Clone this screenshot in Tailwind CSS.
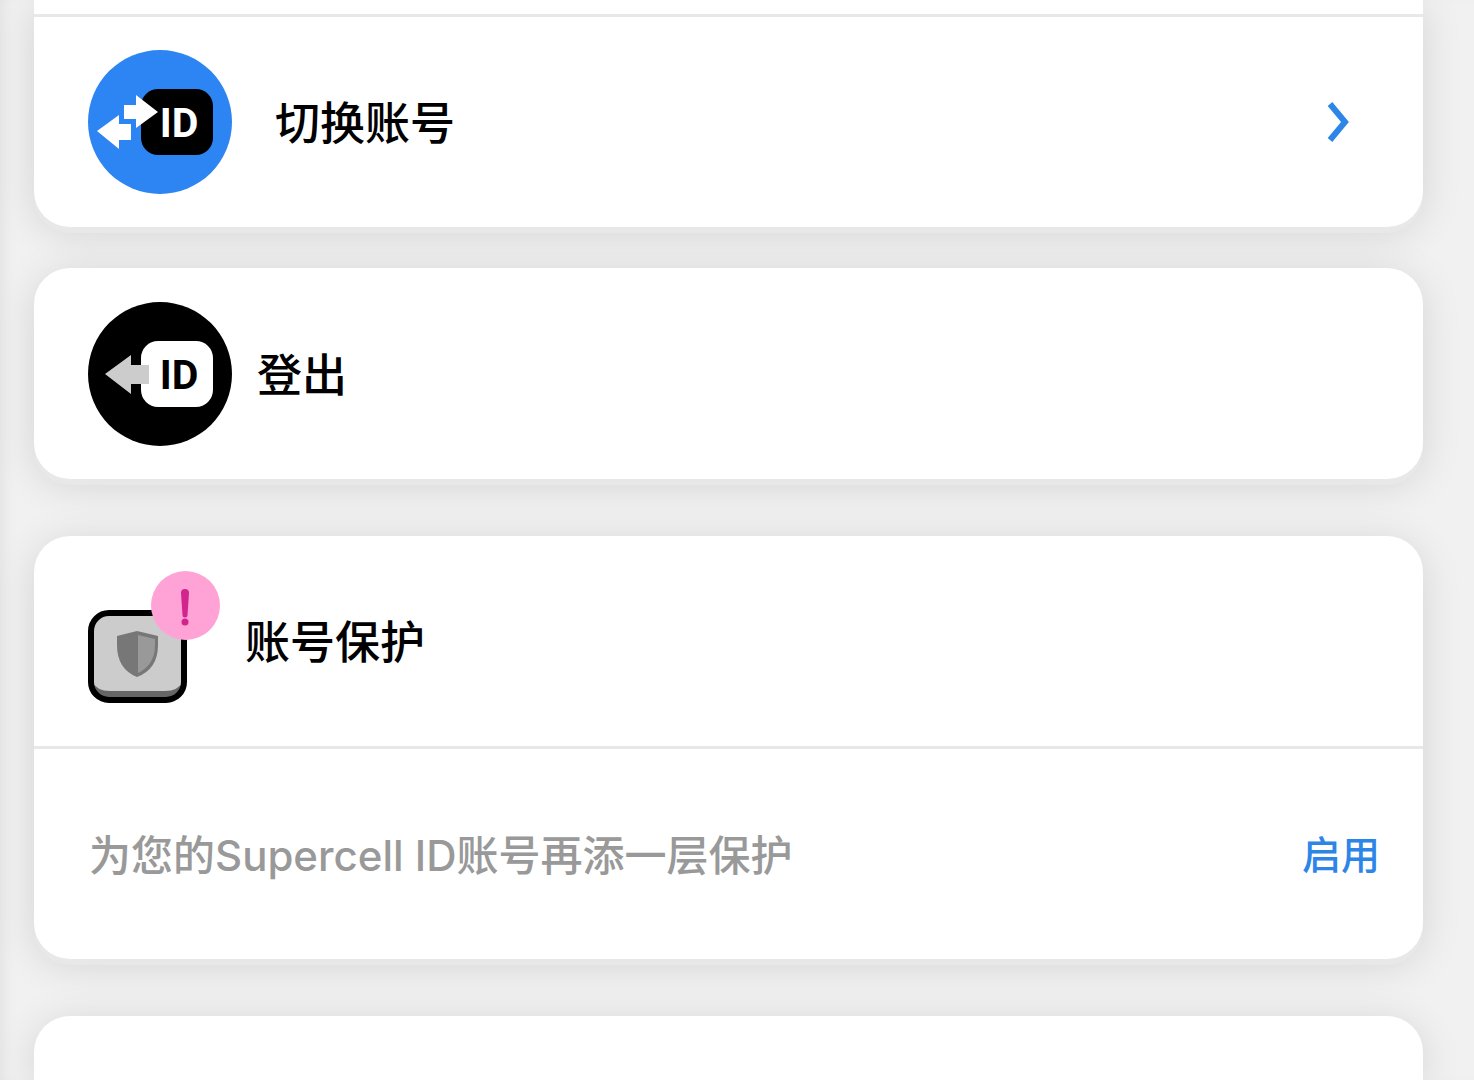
<!DOCTYPE html>
<html lang="zh-CN">
<head>
    <meta charset="UTF-8">
    <meta name="viewport" content="width=device-width, initial-scale=1.0">
    <script src="https://cdn.jsdelivr.net/npm/@tailwindcss/browser@4"></script>
    <title>Supercell ID</title>
</head>
<body class="bg-[#f1f1f1] font-['Inter','Noto_Sans_CJK_SC',sans-serif] font-medium text-black">

    <main class="pl-[34px] pr-[51px] min-h-screen flex flex-col overflow-hidden shadow-[inset_12px_0_16px_-10px_rgba(0,0,0,0.08)]">

        <section class="bg-white rounded-b-[36px] shadow-[0_6px_0_#e8e8e8,0_6px_40px_rgba(0,0,0,0.12)]">
            <div class="h-[14px]"></div>
            <button type="button" class="w-full h-[213px] border-t-3 border-[#e8e8e8] pl-[54px] pr-[72px] flex items-center text-left">
                <svg class="size-36 shrink-0" viewBox="0 0 144 144" aria-hidden="true">
                    <circle cx="72" cy="72" r="72" fill="#2d85f3"/>
                    <rect x="53" y="39" width="72" height="66" rx="17"/>
                    <text x="91" y="87" text-anchor="middle" fill="#fff" class="font-['Roboto',sans-serif] font-bold text-[41px]">ID</text>
                    <path fill="#fff" d="M36 55h12v-10l22 17-22 16v-9H36zM9 81l22-16v9h12v16H31v9z"/>
                </svg>
                <span class="ml-[43px] pt-1 text-[45px]">切换账号</span>
                <svg class="ml-auto w-6 h-10 shrink-0" viewBox="0 0 24 40" fill="none" stroke="#2d85e8" stroke-width="6" aria-hidden="true">
                    <path d="M3 2l15 18L3 38"/>
                </svg>
            </button>
        </section>

        <section class="mt-[41px] bg-white rounded-[36px] shadow-[0_6px_0_#e8e8e8,0_6px_40px_rgba(0,0,0,0.12)]">
            <button type="button" class="w-full h-[211px] px-[54px] flex items-center text-left">
                <svg class="size-36 shrink-0" viewBox="0 0 144 144" aria-hidden="true">
                    <circle cx="72" cy="72" r="72"/>
                    <rect x="53" y="39" width="72" height="66" rx="17" fill="#fff"/>
                    <text x="91" y="87" text-anchor="middle" class="font-['Roboto',sans-serif] font-bold text-[41px]">ID</text>
                    <path fill="#ccc" d="M17 72l26-19v10h18v19H43v10z"/>
                </svg>
                <span class="ml-[25px] pt-1 text-[45px]">登出</span>
            </button>
        </section>

        <section class="mt-[57px] bg-white rounded-[36px] shadow-[0_6px_0_#e8e8e8,0_6px_40px_rgba(0,0,0,0.12)]">
            <div class="h-[210px] px-[54px] flex items-center">
                <svg class="w-[132px] h-[140px] shrink-0" viewBox="0 0 132 140" aria-hidden="true">
                    <rect x="3" y="42" width="93" height="87" rx="18" fill="#666"/>
                    <path fill="#ccc" d="M3 60a18 18 0 0 1 18-18h57a18 18 0 0 1 18 18v50q-6 10-19 10H22q-13 0-19-10z"/>
                    <rect x="3" y="42" width="93" height="87" rx="18" fill="none" stroke="#000" stroke-width="6"/>
                    <path fill="#777" d="M29 65l20-5 21 5v9q0 24-21 32-20-8-20-32z"/>
                    <path fill="#999" d="M50 64l17 4v6q0 20-17 28z"/>
                    <circle cx="97.5" cy="34.5" r="34.5" fill="#ffa2d6"/>
                    <path fill="#d1248c" d="M93 22a4 4 0 0 1 8 0l-1.500 22a2.500 2.500 0 0 1-5 0z"/>
                    <circle cx="97" cy="51" r="3.500" fill="#d1248c"/>
                </svg>
                <h2 class="ml-[25px] pt-1 text-[45px]">账号保护</h2>
            </div>
            <div class="h-[213px] border-t-3 border-[#e8e8e8] pl-[55px] pr-[43px] pt-0.5 flex items-center justify-between">
                <p class="text-[42px] text-[#999]">为您的Supercell ID账号再添一层保护</p>
                <button type="button" class="text-[39px] text-[#2d85e8]">启用</button>
            </div>
        </section>

        <section class="mt-[57px] grow bg-white rounded-t-[36px] shadow-[0_6px_40px_rgba(0,0,0,0.12)]"></section>
    </main>

</body>
</html>
